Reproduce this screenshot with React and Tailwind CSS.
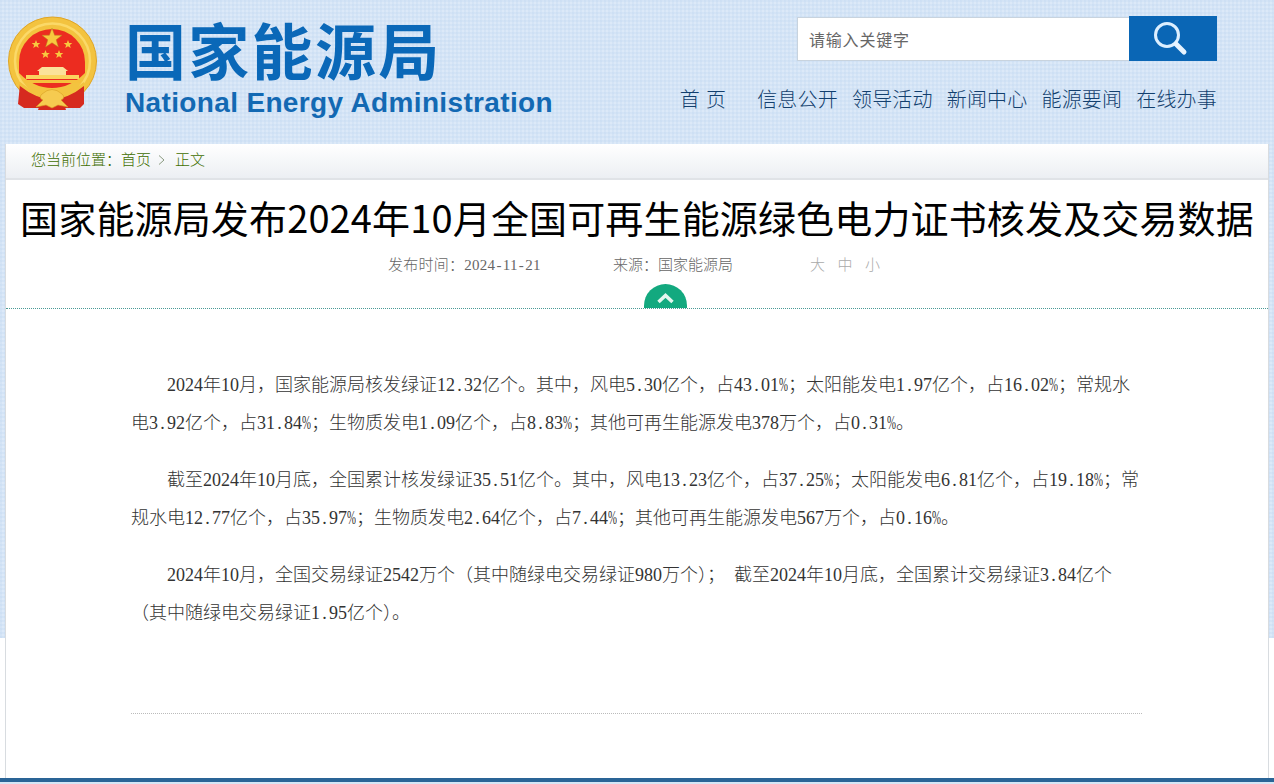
import React from "react";

const cjk = '"Noto Sans CJK SC","Noto Sans",sans-serif';

function Mixed({ text, cell, pct }) {
  return text.split(/([.%\- ])/).map((p, i) => {
    if (p === "." || p === "-" || p === " ") return <span key={i} className={cell}>{p === " " ? "\u00a0" : p}</span>;
    if (p === "%") return <span key={i} className={pct}>%</span>;
    return <React.Fragment key={i}>{p}</React.Fragment>;
  });
}

function Line({ children, indent }) {
  return (
    <div className={indent ? "h-[38px] leading-[38px] whitespace-nowrap pl-[36px]" : "h-[38px] leading-[38px] whitespace-nowrap"}>
      <Mixed text={children} cell="inline-block w-[9px] text-center" pct="inline-block w-[9px] origin-left scale-x-[0.6]" />
    </div>
  );
}

function Emblem() {
  return (
    <svg width="110" height="144" viewBox="0 0 110 144" className="shrink-0">
      <circle cx="52.5" cy="61" r="44" fill="#f3c33f" stroke="#e0a526" strokeWidth="1" />
      <circle cx="52.5" cy="61" r="37.5" fill="none" stroke="#fbd968" strokeWidth="2.5" />
      <path d="M19 62 A33 33 0 0 1 85 62 L85 73 Q70 88 52 88 Q34 88 19 73Z" fill="#ec2c20" />
      <path d="M52 28 L54.6 35.2 L62 35.3 L56.2 39.8 L58.4 47 L52 42.8 L45.6 47 L47.8 39.8 L42 35.3 L49.4 35.2Z" fill="#f8c83f" stroke="#b9801e" strokeWidth="0.5" />
      <path d="M36 40 L37.2 43 L40.3 43.1 L37.9 45 L38.7 48 L36 46.3 L33.3 48 L34.1 45 L31.7 43.1 L34.8 43Z" fill="#f8c83f" />
      <path d="M68 40 L69.2 43 L72.3 43.1 L69.9 45 L70.7 48 L68 46.3 L65.3 48 L66.1 45 L63.7 43.1 L66.8 43Z" fill="#f8c83f" />
      <path d="M45.5 50 L46.7 53 L49.8 53.1 L47.4 55 L48.2 58 L45.5 56.3 L42.8 58 L43.6 55 L41.2 53.1 L44.3 53Z" fill="#f8c83f" />
      <path d="M59 50 L60.2 53 L63.3 53.1 L60.9 55 L61.7 58 L59 56.3 L56.3 58 L57.1 55 L54.7 53.1 L57.8 53Z" fill="#f8c83f" />
      <path d="M42 67 L63 67 L68 71 L66 71 L66 75 L39 75 L39 71 L37 71Z" fill="#fbe29a" />
      <rect x="26" y="75" width="53" height="4" fill="#fbd45f" />
      <rect x="24" y="80" width="57" height="3" fill="#f5c13c" />
      <path d="M20 84 Q34 96 44 98 L40 108 L24 108 L18 104Z" fill="#d62a1f" />
      <path d="M84 84 Q70 96 60 98 L64 108 L80 108 L84 104Z" fill="#d62a1f" />
      <path d="M40 104 L64 104 L66 110 L38 110Z" fill="#d62a1f" />
      <path d="M20 82 Q36 95 52 95 Q68 95 84 82 L84 86 Q68 99 52 99 Q36 99 20 86Z" fill="#f3c33f" />
      <path d="M42 94 Q52 85 62 94 Q66 98 61 100 L68 107 L58 105 L52 108 L46 105 L36 107 L43 100 Q38 98 42 94Z" fill="#f6cb50" stroke="#d89e22" strokeWidth="0.6" />
    </svg>
  );
}

export default function App() {
  return (
    <div
      className="h-[784px] w-full overflow-hidden flex flex-col [background:repeating-linear-gradient(90deg,rgba(190,214,240,0.28)_0px,rgba(190,214,240,0.28)_2px,transparent_2px,transparent_4px)_0_0/100%_638px_no-repeat,repeating-linear-gradient(0deg,rgba(190,214,240,0.28)_0px,rgba(190,214,240,0.28)_2px,transparent_2px,transparent_4px)_0_0/100%_638px_no-repeat,linear-gradient(#dce9f8,#dce9f8)_0_0/100%_638px_no-repeat,#ffffff]"
      style={{ fontFamily: cjk }}
    >
      <header className="h-[144px] shrink-0 flex justify-between">
        <div className="flex">
          <Emblem />
          <div className="ml-[15px]">
            <div className="mt-[17px] h-[64px] leading-[64px] text-[61px] font-bold text-[#0a68b8] tracking-[2.3px] whitespace-nowrap">国家能源局</div>
            <div className="mt-[6px] h-[32px] leading-[32px] text-[28px] font-bold text-[#1369b3] tracking-[0.35px] whitespace-nowrap font-['Liberation_Sans',sans-serif]">National Energy Administration</div>
          </div>
        </div>
        <div className="pr-[57px] flex flex-col items-end">
          <div className="mt-[16px] flex items-center">
            <div className="w-[332px] h-[44px] bg-white border border-[#c8d3de] border-r-0 pl-[11px] flex items-center text-[16px] tracking-[0.8px] text-[#666666]">请输入关键字</div>
            <div className="w-[88px] h-[45px] bg-[#0a66b5]">
              <svg width="88" height="45" viewBox="0 0 88 45">
                <circle cx="38" cy="19" r="11.5" fill="none" stroke="#dcefff" strokeWidth="3" />
                <path d="M47 28 L55 36" stroke="#e6f3ff" strokeWidth="5" strokeLinecap="round" />
              </svg>
            </div>
          </div>
          <nav className="mt-[24px] h-[28px] leading-[28px] flex text-[20px] tracking-[0.19px] text-[#123f6e] font-light whitespace-nowrap">
            <span className="flex gap-[6px] mr-[31px]"><span>首</span><span>页</span></span>
            <div className="flex gap-[14px]">
              <span>信息公开</span>
              <span>领导活动</span>
              <span>新闻中心</span>
              <span>能源要闻</span>
              <span>在线办事</span>
            </div>
          </nav>
        </div>
      </header>

      <main className="ml-[5px] w-[1264px] flex-1 bg-white border-x border-[#d8dce0]">
        <div className="h-[36px] border-b-2 border-[#e0e3e7] bg-gradient-to-b from-white to-[#eceff3] pl-[25px] pb-[3px] flex items-center text-[15px] text-[#3f6e00] font-light whitespace-nowrap">
          <span>您当前位置：首页</span>
          <svg width="24" height="12" viewBox="0 0 24 12"><path d="M8 1.5 L13 6 L8 10.5" fill="none" stroke="#8a9a80" strokeWidth="1" /></svg>
          <span>正文</span>
        </div>

        <h1 className="mt-[14px] h-[46px] leading-[46px] text-center text-[38px] font-normal text-black tracking-[0.15px] whitespace-nowrap">
          国家能源局发布2024年10月全国可再生能源绿色电力证书核发及交易数据
        </h1>

        <div className="mt-[15px] h-[20px] leading-[20px] pl-[382px] flex text-[15px] text-[#666666] font-light whitespace-nowrap font-['Liberation_Serif','Noto_Sans_CJK_SC',serif]">
          <span className="w-[153px] tracking-[0.25px]"><Mixed text="发布时间：2024-11-21" cell="inline-block w-[7.5px] text-center" pct="" /></span>
          <span className="ml-[72px] w-[120px]">来源：国家能源局</span>
          <span className="ml-[77px] flex gap-[12.5px] text-[#aaaaaa]"><span>大</span><span>中</span><span>小</span></span>
        </div>

        <div className="mt-[9px] h-[25px] border-b border-dotted border-[#4a9a96]">
          <svg width="43" height="24" viewBox="0 0 43 24" className="ml-[638px] block">
            <path d="M0 24 V21.5 A21.5 21.5 0 0 1 43 21.5 V24 Z" fill="#13a97f" />
            <path d="M14.5 18 L21.5 11.5 L28.5 18" fill="none" stroke="#e4f7ef" strokeWidth="3.5" />
          </svg>
        </div>

        <article className="ml-[125px] w-[1011px] pt-[57px] text-[18px] text-[#333333] font-light font-['Liberation_Serif','Noto_Sans_CJK_SC',serif]">
          <section>
            <Line indent>2024年10月，国家能源局核发绿证12.32亿个。其中，风电5.30亿个，占43.01%；太阳能发电1.97亿个，占16.02%；常规水</Line>
            <Line>电3.92亿个，占31.84%；生物质发电1.09亿个，占8.83%；其他可再生能源发电378万个，占0.31%。</Line>
          </section>
          <section className="mt-[19px]">
            <Line indent>截至2024年10月底，全国累计核发绿证35.51亿个。其中，风电13.23亿个，占37.25%；太阳能发电6.81亿个，占19.18%；常</Line>
            <Line>规水电12.77亿个，占35.97%；生物质发电2.64亿个，占7.44%；其他可再生能源发电567万个，占0.16%。</Line>
          </section>
          <section className="mt-[19px]">
            <Line indent>2024年10月，全国交易绿证2542万个（其中随绿电交易绿证980万个）； 截至2024年10月底，全国累计交易绿证3.84亿个</Line>
            <Line>（其中随绿电交易绿证1.95亿个）。</Line>
          </section>
          <div className="mt-[81px] border-t border-dotted border-[#bbbbbb]" />
        </article>
      </main>

      <div className="h-[4px] shrink-0 bg-[#2a6496]" />
      <div className="h-[2px] shrink-0 bg-[#d5e6f5]" />
    </div>
  );
}
